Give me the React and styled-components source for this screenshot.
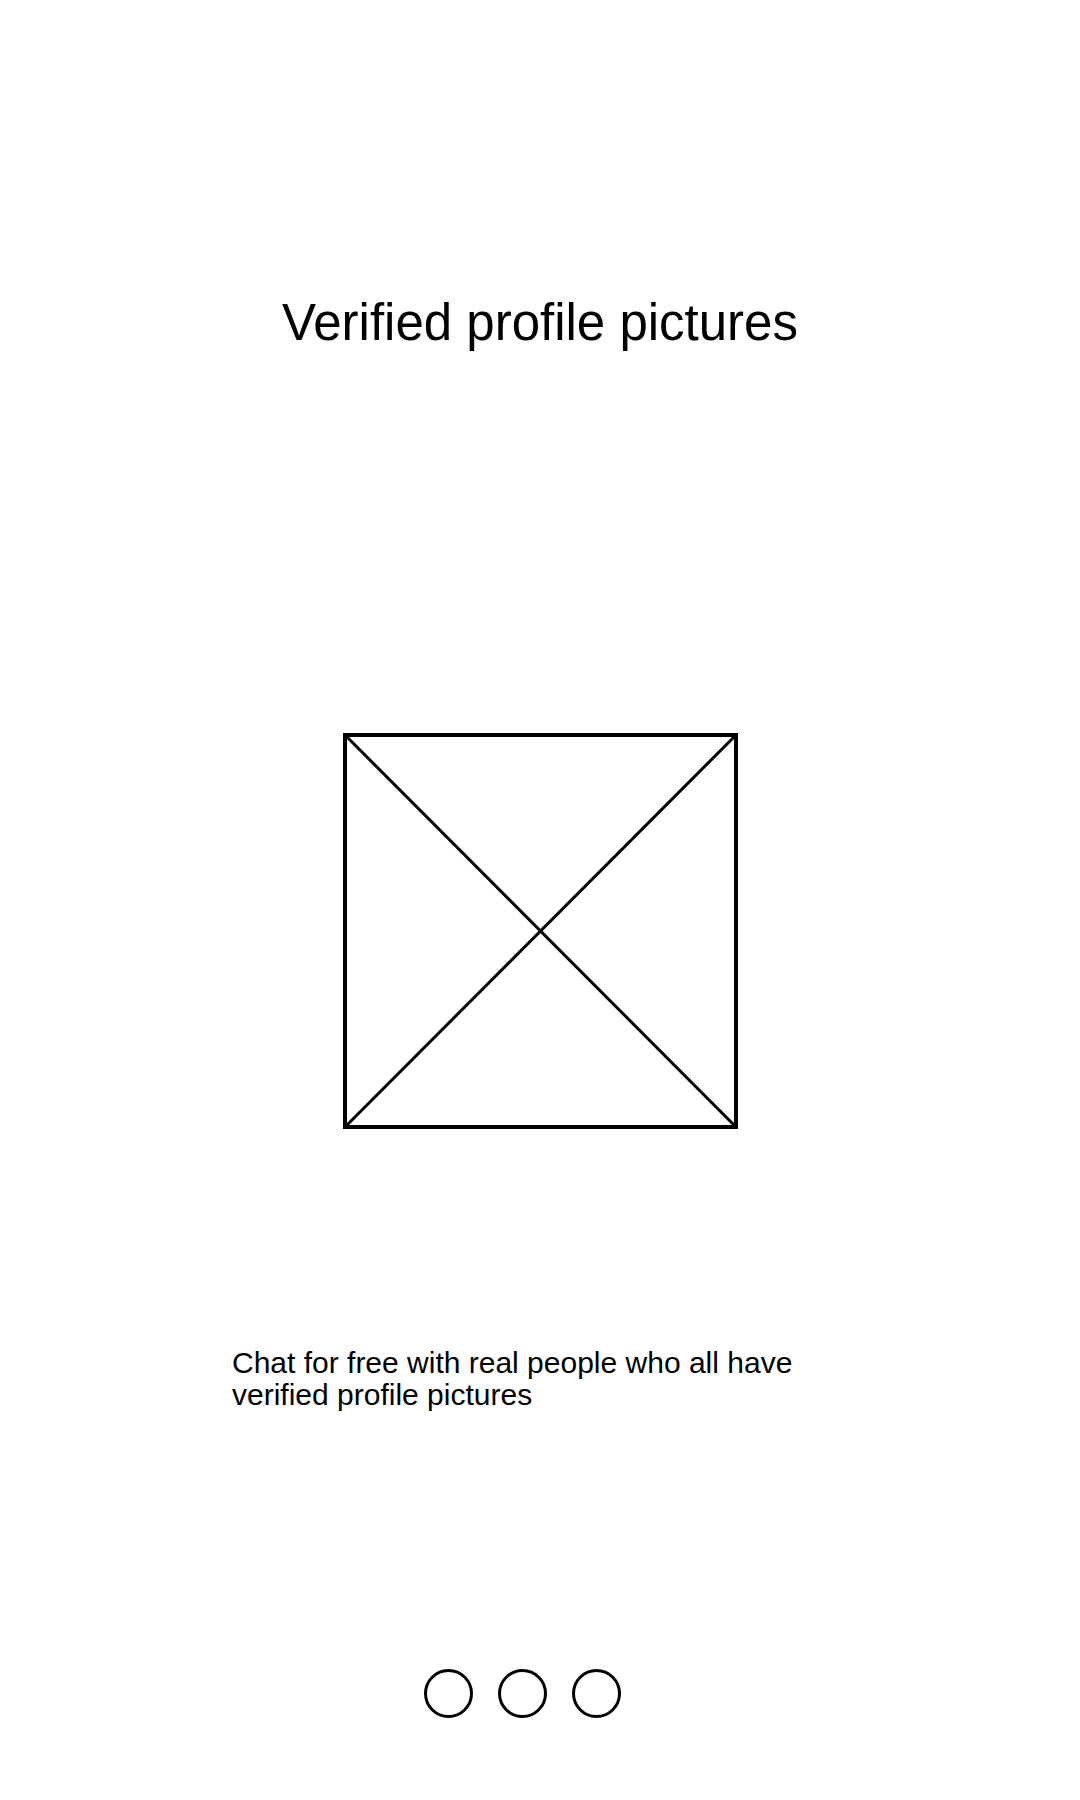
import React from 'react'
import styled, { createGlobalStyle } from 'styled-components'

const GlobalStyle = createGlobalStyle`
  body {
    margin: 0;
    background: #fff;
    font-family: 'Liberation Sans', Arial, sans-serif;
    color: #000;
  }
`

const Screen = styled.div`
  width: 1080px;
  height: 1800px;
  display: flex;
  flex-direction: column;
  align-items: center;
`

const Title = styled.h1`
  margin: 294px 0 0 0;
  font-size: 51px;
  font-weight: normal;
  line-height: 58px;
`

const Placeholder = styled.svg`
  margin-top: 381px;
  display: block;
`

const Blurb = styled.p`
  margin: 218px 0 0 0;
  width: 616px;
  font-size: 30px;
  line-height: 32px;
`

const Dots = styled.div`
  margin: 258px 36px 0 0;
  display: flex;
  gap: 25px;
`

const Dot = styled.span`
  width: 43px;
  height: 43px;
  border: 3px solid #000;
  border-radius: 50%;
  background: ${p => (p.$active ? '#000' : 'transparent')};
`

function ImagePlaceholder() {
  return (
    <Placeholder width="395" height="396" viewBox="0 0 395 396">
      <rect x="2" y="2" width="391" height="392" fill="none" stroke="#000" strokeWidth="4" />
      <line x1="2" y1="2" x2="393" y2="394" stroke="#000" strokeWidth="3" />
      <line x1="393" y1="2" x2="2" y2="394" stroke="#000" strokeWidth="3" />
    </Placeholder>
  )
}

export default function App() {
  return (
    <Screen>
      <GlobalStyle />
      <Title>Verified profile pictures</Title>
      <ImagePlaceholder />
      <Blurb>Chat for free with real people who all have verified profile pictures</Blurb>
      <Dots>
        <Dot />
        <Dot />
        <Dot />
      </Dots>
    </Screen>
  )
}
